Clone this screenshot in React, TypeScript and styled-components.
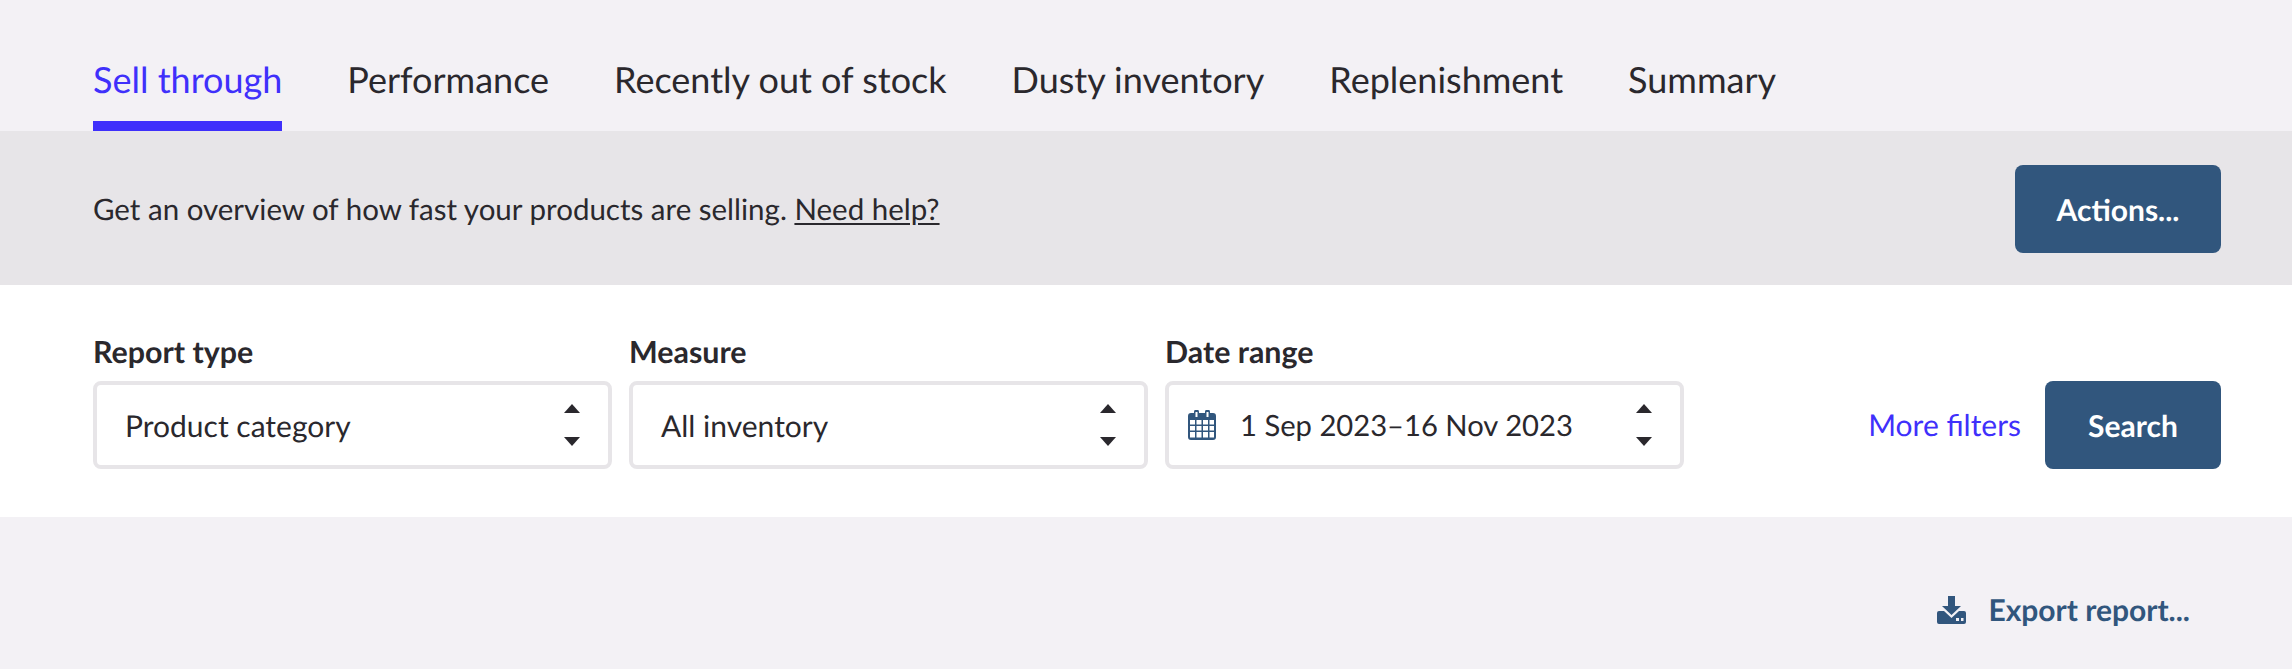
import React from "react";
import styled, { createGlobalStyle } from "styled-components";

const Global = createGlobalStyle`
  html, body { margin: 0; padding: 0; background: #f3f1f5; }
  body { font-family: Lato, "Noto Sans", sans-serif; color: #2a282d; text-rendering: geometricPrecision; }
  * { box-sizing: border-box; }
`;

const Page = styled.div`
  width: 2292px;
  height: 669px;
  overflow: hidden;
  background: #f3f1f5;
`;

const TabBar = styled.nav`
  display: flex;
  gap: 65px;
  height: 131px;
  padding: 0 93px;
  align-items: flex-end;
`;

const Tab = styled.a<{ $active?: boolean }>`
  display: block;
  font-size: 36px;
  line-height: 44px;
  height: 74px;
  color: ${(p) => (p.$active ? "#3f30fb" : "#2a282d")};
  border-bottom: 10px solid ${(p) => (p.$active ? "#3f30fb" : "transparent")};
  white-space: nowrap;
`;

const Banner = styled.section`
  display: flex;
  align-items: center;
  justify-content: space-between;
  height: 154px;
  padding: 2px 71px 0 93px;
  background: #e7e5e8;
`;

const BannerText = styled.p`
  margin: 0;
  padding-top: 2px;
  font-size: 29.5px;
  line-height: 36px;
`;

const HelpLink = styled.a`
  text-decoration: underline;
  text-underline-offset: 3px;
`;

const PrimaryButton = styled.button<{ $width: number }>`
  width: ${(p) => p.$width}px;
  height: 88px;
  padding: 2px 0 0;
  border: 0;
  border-radius: 8px;
  background: #31567d;
  color: #fff;
  font: 700 30px/36px Lato, sans-serif;
  text-rendering: geometricPrecision;
`;

const FilterBar = styled.section`
  display: flex;
  align-items: flex-end;
  height: 232px;
  padding: 0 71px 48px 93px;
  background: #fff;
`;

const Fields = styled.div`
  display: flex;
  gap: 17px;
`;

const Field = styled.div`
  display: flex;
  flex-direction: column;
  gap: 11px;
  width: 519px;
`;

const Label = styled.label`
  font-size: 30.4px;
  line-height: 36px;
  font-weight: 700;
`;

const Select = styled.div<{ $hasIcon?: boolean }>`
  display: flex;
  align-items: center;
  height: 88px;
  padding: 0 28px 0 ${(p) => (p.$hasIcon ? 19 : 28)}px;
  border: 4px solid #e7e5e8;
  border-radius: 8px;
  background: #fff;
  font-size: 30px;
  gap: ${(p) => (p.$hasIcon ? 24 : 20)}px;
`;

const SelectText = styled.span<{ $tight?: boolean }>`
  flex: 1;
  padding-top: 1px;
  white-space: nowrap;
  font-size: ${(p) => (p.$tight ? 29.2 : 30)}px;
`;

const Actions = styled.div`
  display: flex;
  align-items: center;
  gap: 24px;
  margin-left: auto;
`;

const MoreFilters = styled.a`
  font-size: 30px;
  color: #3f30fb;
`;

const ExportRow = styled.div`
  display: flex;
  justify-content: flex-end;
  padding: 75px 102px 0 0;
`;

const ExportLink = styled.a`
  display: flex;
  align-items: center;
  gap: 22px;
  font-size: 30px;
  line-height: 36px;
  font-weight: 700;
  color: #31567d;
`;

const Stepper = () => (
  <svg width="16" height="42" viewBox="0 0 16 42" fill="#2a282d" aria-hidden>
    <path d="M8 0 16 9H0Z" />
    <path d="M0 33h16l-8 9Z" />
  </svg>
);

const CalendarIcon = () => (
  <svg width="28" height="30" viewBox="0 0 28 30" aria-hidden>
    <path
      fill="#31567d"
      d="M3 3h3V2a2.500 2.500 0 0 1 5 0v1h6V2a2.500 2.500 0 0 1 5 0v1h3a3 3 0 0 1 3 3v21a3 3 0 0 1-3 3H3a3 3 0 0 1-3-3V6a3 3 0 0 1 3-3Z"
    />
    <path
      fill="#fff"
      d="M7.500 2h2v5h-2zM18.500 2h2v5h-2zM2 10h5v4.500H2zM8.500 10h5v4.500h-5zM15 10h5v4.500h-5zM21.500 10H26v4.500h-4.500zM2 16h5v4.500H2zM8.500 16h5v4.500h-5zM15 16h5v4.500h-5zM21.500 16H26v4.500h-4.500zM2 22h5v5.500H2zM8.500 22h5v5.500h-5zM15 22h5v5.500h-5zM21.500 22H26v5.500h-4.500z"
    />
  </svg>
);

const ExportIcon = () => (
  <svg width="29" height="28" viewBox="0 0 29 28" fill="#31567d" aria-hidden>
    <path d="M11 0h7v10h6l-9.500 9L5 10h6Z" />
    <path d="M2 15h5l7.500 7 7.500-7h5a2 2 0 0 1 2 2v9a2 2 0 0 1-2 2H2a2 2 0 0 1-2-2v-9a2 2 0 0 1 2-2Z" />
    <path fill="#f3f1f5" d="M19 22h3v3h-3zM24 22h2.500v3H24z" />
  </svg>
);

const tabs = ["Sell through", "Performance", "Recently out of stock", "Dusty inventory", "Replenishment", "Summary"];

export default function App() {
  return (
    <Page>
      <Global />
      <TabBar>
        {tabs.map((t, i) => (
          <Tab key={t} $active={i === 0}>{t}</Tab>
        ))}
      </TabBar>
      <Banner>
        <BannerText>
          Get an overview of how fast your products are selling. <HelpLink>Need help?</HelpLink>
        </BannerText>
        <PrimaryButton $width={206}>Actions...</PrimaryButton>
      </Banner>
      <FilterBar>
        <Fields>
          <Field>
            <Label>Report type</Label>
            <Select>
              <SelectText>Product category</SelectText>
              <Stepper />
            </Select>
          </Field>
          <Field>
            <Label>Measure</Label>
            <Select>
              <SelectText>All inventory</SelectText>
              <Stepper />
            </Select>
          </Field>
          <Field>
            <Label>Date range</Label>
            <Select $hasIcon>
              <CalendarIcon />
              <SelectText $tight>1 Sep 2023–16 Nov 2023</SelectText>
              <Stepper />
            </Select>
          </Field>
        </Fields>
        <Actions>
          <MoreFilters>More filters</MoreFilters>
          <PrimaryButton $width={176}>Search</PrimaryButton>
        </Actions>
      </FilterBar>
      <ExportRow>
        <ExportLink>
          <ExportIcon />
          Export report...
        </ExportLink>
      </ExportRow>
    </Page>
  );
}
